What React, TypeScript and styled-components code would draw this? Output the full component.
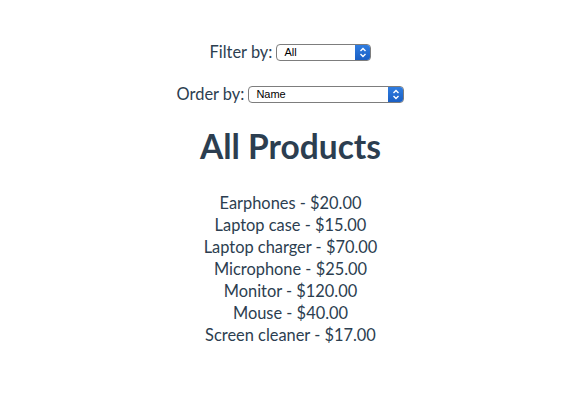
import styled, { createGlobalStyle } from "styled-components";

const GlobalStyle = createGlobalStyle`
  body {
    margin: 0;
    background: #ffffff;
  }
`;

const Page = styled.div`
  font-family: Lato, "Open Sans", sans-serif;
  color: #2c3e50;
  text-align: center;
  padding-top: 42px;
`;

const FilterRow = styled.div<{ $gap?: number }>`
  display: flex;
  justify-content: center;
  align-items: center;
  gap: 4px;
  font-size: 16.4px;
  line-height: 20px;
  margin-bottom: ${(props) => props.$gap ?? 0}px;
`;

const SelectBox = styled.div<{ $width: number }>`
  display: inline-flex;
  align-items: stretch;
  width: ${(props) => props.$width}px;
  height: 17px;
  box-sizing: border-box;
  border: 1px solid #7d7d7d;
  border-radius: 4px;
  overflow: hidden;
  background: #fff;
`;

const NativeSelect = styled.select`
  appearance: none;
  -webkit-appearance: none;
  flex: 1;
  min-width: 0;
  border: none;
  outline: none;
  background: transparent;
  font-family: "Liberation Sans", Arial, sans-serif;
  font-size: 11px;
  color: #000;
  padding: 0 0 0 7px;
  margin: 0;
  height: 15px;
  line-height: 15px;
`;

const Stepper = styled.span`
  display: flex;
  align-items: center;
  justify-content: center;
  width: 15px;
  background: linear-gradient(#2f7de1, #1a5fc4);
`;

const Title = styled.h1`
  font-size: 33.5px;
  font-weight: 700;
  margin: 22px 0 26px;
  line-height: 40px;
`;

const ProductList = styled.ul`
  list-style: none;
  margin: 0;
  padding: 0;
`;

const Product = styled.li`
  font-size: 16.4px;
  line-height: 22px;
`;

const Chevrons = () => (
  <svg width="8" height="11" viewBox="0 0 8 11">
    <path d="M1.5 4 L4 1.5 L6.5 4" fill="none" stroke="#fff" strokeWidth="1.4" />
    <path d="M1.5 7 L4 9.5 L6.5 7" fill="none" stroke="#fff" strokeWidth="1.4" />
  </svg>
);

const products = [
  { name: "Earphones", price: 20 },
  { name: "Laptop case", price: 15 },
  { name: "Laptop charger", price: 70 },
  { name: "Microphone", price: 25 },
  { name: "Monitor", price: 120 },
  { name: "Mouse", price: 40 },
  { name: "Screen cleaner", price: 17 },
];

export default function App() {
  return (
    <>
      <GlobalStyle />
      <Page>
        <FilterRow $gap={22}>
          <span>Filter by:</span>
          <SelectBox $width={95}>
            <NativeSelect defaultValue="All">
              <option>All</option>
            </NativeSelect>
            <Stepper>
              <Chevrons />
            </Stepper>
          </SelectBox>
        </FilterRow>
        <FilterRow>
          <span>Order by:</span>
          <SelectBox $width={156}>
            <NativeSelect defaultValue="Name">
              <option>Name</option>
            </NativeSelect>
            <Stepper>
              <Chevrons />
            </Stepper>
          </SelectBox>
        </FilterRow>
        <Title>All Products</Title>
        <ProductList>
          {products.map((p) => (
            <Product key={p.name}>
              {p.name} - ${p.price.toFixed(2)}
            </Product>
          ))}
        </ProductList>
      </Page>
    </>
  );
}
